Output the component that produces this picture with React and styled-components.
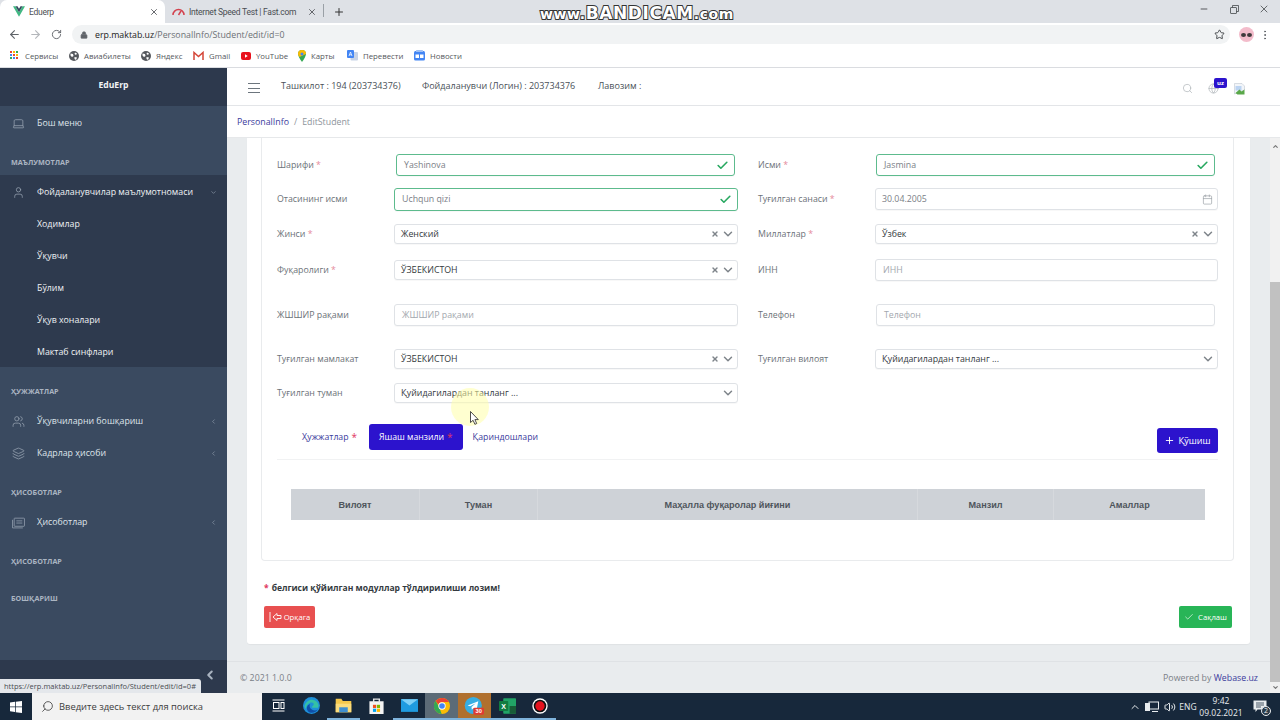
import React from "react";
import styled, { createGlobalStyle } from "styled-components";
import {
  ArrowLeft, ArrowRight, RotateCw, Lock, Star, MoreVertical, X, Plus, Minus, Check,
  ChevronDown, ChevronLeft, ChevronUp, Search, Globe, Laptop, User, Users, Layers,
  Calendar, Volume2,
} from "lucide-react";

const GlobalStyle = createGlobalStyle`
  html, body { margin: 0; padding: 0; height: 100%; overflow: hidden; }
  body { font-family: "Open Sans", "Noto Sans", sans-serif; color: #495057; }
  * { box-sizing: border-box; }
`;

const Page = styled.div`
  position: relative;
  width: 1280px;
  height: 720px;
  display: flex;
  flex-direction: column;
  overflow: hidden;
  background: #e9ecee;
`;

/* browser chrome */
const TabStrip = styled.div`
  height: 23px;
  background: #dee1e6;
  display: flex;
  align-items: stretch;
  font: 400 8.5px Roboto, sans-serif;
  letter-spacing: -0.25px;
  color: #4a4d52;
`;
const Tab = styled.div`
  width: ${(p) => p.$w}px;
  padding: 0 6px 0 ${(p) => p.$pad}px;
  display: flex;
  align-items: center;
  gap: ${(p) => p.$gap}px;
  background: ${(p) => (p.$active ? "#fff" : "transparent")};
  border-radius: 7px 7px 0 0;
  span { flex: 1; white-space: nowrap; }
`;
const TabDivider = styled.i`
  width: 1px;
  height: 13px;
  margin: 4px 0 0 0;
  background: #9aa0a6;
`;
const NewTab = styled.div`
  width: 30px;
  display: flex;
  align-items: center;
  justify-content: center;
`;
const WindowControls = styled.div`
  margin-left: auto;
  display: flex;
  align-items: center;
  padding: 0 1px 5px 0;
`;
const WindowButton = styled.div`
  width: 30px;
  display: flex;
  justify-content: center;
  color: #3c4043;
`;
const AddressBar = styled.div`
  height: 22px;
  background: #fff;
  display: flex;
  align-items: center;
  padding: 1px 5px 0 4px;
  color: #5f6368;
`;
const NavButton = styled.div`
  width: 21px;
  display: flex;
  justify-content: center;
  color: ${(p) => (p.$off ? "#b4b7bb" : "#5f6368")};
`;
const UrlPill = styled.div`
  flex: 1;
  height: 19px;
  margin-left: 5px;
  padding: 0 5px 0 8px;
  border-radius: 10px;
  background: #f1f3f4;
  display: flex;
  align-items: center;
  gap: 7px;
  font-size: 8.8px;
  color: #6c7075;
  b { font-weight: 400; color: #222; }
  svg:last-child { margin-left: auto; }
`;
const Avatar = styled.div`
  width: 15px;
  height: 15px;
  margin-left: 9px;
  border-radius: 50%;
  background: #f3bccb;
  display: flex;
  align-items: center;
  justify-content: center;
  gap: 1px;
  i { width: 5px; height: 4px; border-radius: 50%; background: #3f3a3c; }
`;
const BookmarksBar = styled.div`
  height: 23px;
  background: #fff;
  border-bottom: 1px solid #dadce0;
  display: flex;
  align-items: center;
  padding: 0 0 1px 10px;
  font-size: 7.8px;
  color: #55585d;
`;
const Bookmark = styled.div`
  width: ${(p) => p.$w}px;
  display: flex;
  align-items: center;
  gap: ${(p) => p.$gap || 5}px;
  white-space: nowrap;
`;
const AppsGrid = styled.div`
  width: 9px;
  height: 9px;
  display: grid;
  grid-template-columns: repeat(3, 2px);
  grid-auto-rows: 2px;
  gap: 1px;
  i { display: block; }
`;

/* app */
const Body = styled.div`
  flex: 1;
  min-height: 0;
  display: flex;
`;
const Sidebar = styled.aside`
  width: 227px;
  background: #3a4a60;
  display: flex;
  flex-direction: column;
  color: #dfe4ea;
  font-size: 8.8px;
`;
const Brand = styled.div`
  height: 38px;
  flex: none;
  background: #2d394d;
  color: #f1f3f5;
  font-weight: 700;
  font-size: 8.6px;
  display: flex;
  align-items: center;
  justify-content: center;
  padding-bottom: 4px;
`;
const MenuItem = styled.div`
  height: 32px;
  flex: none;
  display: flex;
  align-items: center;
  padding: 2px 10px 0 ${(p) => (p.$child ? 37 : 12)}px;
  font-weight: ${(p) => (p.$strong ? 500 : 400)};
  color: ${(p) => (p.$strong ? "#eef1f4" : "inherit")};
  svg.lead { width: 13px; height: 13px; margin-right: 12px; color: #98a4b3; flex: none; stroke-width: 1.4; }
  svg.tail { margin-left: auto; color: #98a4b3; }
`;
const OpenGroup = styled.div`
  background: #2e3a4e;
`;
const Section = styled.div`
  height: 37px;
  flex: none;
  padding: 18px 0 0 11px;
  font-size: 7.2px;
  font-weight: 700;
  line-height: 12px;
  color: #abb5c2;
`;
const SidebarFoot = styled.div`
  margin-top: auto;
  height: 33px;
  background: #2d394d;
  display: flex;
  justify-content: flex-end;
  padding: 8px 10px 0 0;
  color: #a9b3c0;
`;

const Main = styled.main`
  flex: 1;
  min-width: 0;
  display: flex;
  flex-direction: column;
`;
const TopBar = styled.header`
  height: 38px;
  flex: none;
  background: #fff;
  border-bottom: 1px solid #e3e5e8;
  display: flex;
  align-items: center;
  font-size: 9px;
  color: #495057;
  padding: 0 0 3px 21px;
`;
const Burger = styled.div`
  width: 12px;
  height: 10px;
  margin: 6px 21px 0 0;
  border-top: 1px solid #6c757d;
  border-bottom: 1px solid #6c757d;
  display: flex;
  align-items: center;
  &::before { content: ""; width: 100%; height: 1px; background: #6c757d; }
`;
const TopInfo = styled.span`
  width: ${(p) => p.$w}px;
  white-space: nowrap;
`;
const TopIcons = styled.div`
  margin-left: auto;
  margin-right: 35px;
  padding-top: 7px;
  display: flex;
  align-items: center;
  gap: 15px;
  color: #aeb3b8;
`;
const GlobeWrap = styled.div`
  position: relative;
  display: flex;
`;
const LangBadge = styled.span`
  position: absolute;
  left: 6px;
  top: -5px;
  width: 13px;
  height: 10px;
  border-radius: 2px;
  background: #2c13cd;
  color: #fff;
  font-size: 6px;
  font-weight: 700;
  line-height: 10px;
  text-align: center;
`;
const Breadcrumb = styled.nav`
  height: 32px;
  flex: none;
  background: #fff;
  border-bottom: 1px solid #e6e8ea;
  display: flex;
  align-items: center;
  gap: 5px;
  padding: 1px 0 0 10px;
  font-size: 8.8px;
  color: #8d949b;
  a { color: #3a3a9c; }
`;
const Scroller = styled.div`
  flex: 1;
  min-height: 0;
  display: flex;
`;
const Content = styled.div`
  flex: 1;
  min-width: 0;
  display: flex;
  flex-direction: column;
`;
const OuterCard = styled.section`
  height: 506px;
  flex: none;
  margin: 0 20px;
  padding: 0 16px 0 14px;
  background: #fff;
  border-radius: 0 0 3px 3px;
  box-shadow: 0 1px 1px rgba(0, 0, 0, 0.04);
`;
const InnerCard = styled.div`
  height: 423px;
  padding: 10px 15px 0 15px;
  border: 1px solid #e9ebed;
  border-top: 0;
  border-radius: 0 0 4px 4px;
`;
const FormRow = styled.div`
  height: ${(p) => p.$h}px;
  display: flex;
  gap: 20px;
  align-items: center;
`;
const Field = styled.div`
  width: ${(p) => p.$w}px;
  display: grid;
  grid-template-columns: 117px 1fr;
  align-items: center;
`;
const Label = styled.label`
  font-size: 8.8px;
  color: #6c7278;
  white-space: nowrap;
  em { font-style: normal; color: #e58a9b; }
`;
const Box = styled.div`
  height: ${(p) => p.$h || 22}px;
  margin: 0 ${(p) => (p.$inset ? 3 : 0)}px 0 ${(p) => p.$inset || 0}px;
  padding: 0 ${(p) => p.$right || 5}px 0 ${(p) => p.$pad || 8}px;
  display: flex;
  align-items: center;
  border: 1px solid ${(p) => (p.$valid ? "#5dbb8d" : "#dfe2e6")};
  border-radius: 3px;
  background: #fff;
  box-shadow: 0 1px 1px rgba(0, 0, 0, 0.03);
  font-size: 8.8px;
  color: #343a40;
  svg { flex: none; }
`;
const InputText = styled.span`
  flex: 1;
  color: ${(p) => (p.$muted ? "#a3a8ae" : p.$value ? "#7b8087" : "inherit")};
`;
const SelectIcons = styled.div`
  display: flex;
  align-items: center;
  gap: 2px;
  color: #7e848a;
`;

const TabsRow = styled.div`
  display: flex;
  align-items: flex-start;
  height: 36px;
  margin-top: 14px;
  border-bottom: 1px solid #f1f2f3;
  padding-left: 25px;
  font-size: 8.7px;
  color: #3a3a9c;
`;
const TabLink = styled.div`
  height: 26px;
  margin-right: ${(p) => p.$mr || 0}px;
  padding: ${(p) => (p.$active ? "0 10px" : "0")};
  display: flex;
  align-items: center;
  gap: 3px;
  white-space: nowrap;
  border-radius: 3px;
  background: ${(p) => (p.$active ? "#2c13cd" : "transparent")};
  color: ${(p) => (p.$active ? "#fff" : "inherit")};
  em { font-style: normal; color: #e0355f; font-size: 10px; }
`;
const AddButton = styled.button`
  margin: 4px 0 0 auto;
  width: 61px;
  height: 25px;
  border: 0;
  border-radius: 3px;
  background: #2c13cd;
  color: #fff;
  font: 500 9px "Open Sans", sans-serif;
  display: flex;
  align-items: center;
  justify-content: center;
  gap: 3px;
`;
const TableHead = styled.div`
  margin: 29px 13px 0 14px;
  height: 31px;
  display: grid;
  grid-template-columns: 128px 118px 380px 136px 152px;
  background: #ced2d7;
`;
const HeadCell = styled.div`
  display: flex;
  align-items: center;
  justify-content: center;
  font: 700 9.1px "Liberation Sans", Arial, sans-serif;
  color: #4f555c;
  & + & { border-left: 1px solid #d6d9dd; }
`;
const Note = styled.p`
  margin: 21px 0 0 3px;
  font-size: 8.5px;
  font-weight: 700;
  line-height: 12px;
  color: #343a40;
  em { font-style: normal; color: #e0355f; margin-right: 3px; }
`;
const Actions = styled.div`
  margin: 12px 2px 0 3px;
  display: flex;
  justify-content: space-between;
`;
const ActionButton = styled.button`
  width: ${(p) => p.$w}px;
  height: 22px;
  padding: 0;
  border: 0;
  border-radius: 2px;
  background: ${(p) => p.$bg};
  color: #fff;
  font: 400 7.7px "Open Sans", sans-serif;
  display: flex;
  align-items: center;
  justify-content: center;
  gap: 2px;
`;
const Footer = styled.footer`
  margin-top: 17px;
  height: 33px;
  border-top: 1px solid #dfe2e5;
  display: flex;
  align-items: center;
  justify-content: space-between;
  padding: 0 12px 0 13px;
  font-size: 8.8px;
  color: #7a8087;
  a { color: #3a3a9c; }
`;
const ScrollTrack = styled.div`
  width: 10px;
  flex: none;
  padding: 5px 0 2px;
  background: #f1f1f1;
  display: flex;
  flex-direction: column;
  align-items: center;
  color: #777;
`;
const ScrollThumb = styled.div`
  width: 100%;
  height: 400px;
  margin: 132px 0 auto;
  background: #c1c1c1;
`;

/* taskbar */
const Taskbar = styled.div`
  height: 27px;
  flex: none;
  background: #17283b;
  display: flex;
  align-items: stretch;
  color: #e8ecef;
`;
const StartButton = styled.div`
  width: 32px;
  display: flex;
  align-items: center;
  justify-content: center;
`;
const SearchBox = styled.div`
  width: 230px;
  background: #f2f2f2;
  display: flex;
  align-items: center;
  gap: 5px;
  padding-left: 9px;
  font-size: 9.4px;
  color: #3d3d3d;
`;
const TaskCell = styled.div`
  width: 32.7px;
  display: flex;
  align-items: center;
  justify-content: center;
  background: ${(p) => p.$bg || "transparent"};
  border-bottom: 2px solid ${(p) => (p.$open ? "#7fb4dc" : "transparent")};
`;
const Tray = styled.div`
  margin-left: auto;
  display: flex;
  align-items: center;
  font-size: 8.5px;
  padding-right: 5px;
`;
const TrayItem = styled.div`
  width: ${(p) => p.$w}px;
  display: flex;
  justify-content: center;
  text-align: center;
  line-height: 12px;
  position: relative;
`;
const NotifyBadge = styled.span`
  position: absolute;
  left: 16px;
  top: 6px;
  width: 10px;
  height: 10px;
  border-radius: 50%;
  background: #2b3a48;
  border: 1px solid #e8ecef;
  font-size: 7px;
  line-height: 8px;
`;

/* things lying over the page */
const StatusTip = styled.div`
  position: absolute;
  left: 0;
  bottom: 27px;
  width: 201px;
  height: 14px;
  padding-left: 4px;
  border-radius: 0 3px 0 0;
  background: #e4e7eb;
  font-size: 7.5px;
  line-height: 14px;
  color: #4a4d52;
  white-space: nowrap;
`;
const Watermark = styled.div`
  position: absolute;
  left: 540px;
  top: 3px;
  display: flex;
  align-items: baseline;
  font: 700 17px/20px "DejaVu Sans", sans-serif;
  letter-spacing: 0.6px;
  color: #fff;
  -webkit-text-stroke: 2px #333;
  paint-order: stroke fill;
  small { font-size: 14px; letter-spacing: 0.6px; }
`;
const CursorGlow = styled.div`
  position: absolute;
  left: 451px;
  top: 388px;
  width: 38px;
  height: 38px;
  border-radius: 50%;
  background: rgba(255, 255, 170, 0.55);
`;
const CursorArrow = styled.svg`
  position: absolute;
  left: 470px;
  top: 411px;
`;

const VueIcon = () => (
  <svg width="12" height="11" viewBox="0 0 24 21"><path fill="#41b883" d="M0 0h5l7 12 7-12h5L12 21z" /><path fill="#34495e" d="M5 0h4l3 5 3-5h4l-7 12z" /></svg>
);
const GaugeIcon = () => (
  <svg width="13" height="9" viewBox="0 0 26 16" fill="none" stroke="#d3434f" strokeWidth="3"><path d="M2 15a11 11 0 0 1 22 0" /><path d="M13 15l5-8" /></svg>
);
const GlobeDark = () => (
  <svg width="10" height="10" viewBox="0 0 20 20"><circle cx="10" cy="10" r="10" fill="#55585d" /><path d="M3 5l5 1 1 4-3 2-3-3zM12 3l4 2-2 3-3-2zM11 12l5 1-2 5-3-2z" fill="#fff" /></svg>
);
const GmailIcon = () => (
  <svg width="11" height="9" viewBox="0 0 22 18" fill="none" stroke="#d44638" strokeWidth="3"><path d="M2 18V3l9 8 9-8v15" /></svg>
);
const YoutubeIcon = () => (
  <svg width="10" height="8" viewBox="0 0 20 16"><rect width="20" height="16" rx="4" fill="#e8121d" /><path d="M8 4.500l5.500 3.500L8 11.500z" fill="#fff" /></svg>
);
const MapsIcon = () => (
  <svg width="8" height="12" viewBox="0 0 16 24"><path d="M8 0a8 8 0 0 1 8 8c0 5-8 16-8 16S0 13 0 8a8 8 0 0 1 8-8z" fill="#34a853" /><path d="M8 0a8 8 0 0 1 8 8L3 14C1 11 0 9.500 0 8a8 8 0 0 1 8-8z" fill="#fbbc04" /><circle cx="8" cy="8" r="3" fill="#4285f4" /></svg>
);
const TranslateIcon = () => (
  <svg width="11" height="11" viewBox="0 0 22 22"><rect x="7" y="4" width="15" height="17" rx="2" fill="#c8d3e6" /><rect width="14" height="16" rx="2" fill="#4285f4" /><path d="M4 12l3-8 3 8M5 9.500h4" stroke="#fff" strokeWidth="1.500" fill="none" /></svg>
);
const NewsIcon = () => (
  <svg width="11" height="11" viewBox="0 0 22 22"><rect y="2" width="22" height="19" rx="3" fill="#4285f4" /><rect x="4" y="0" width="14" height="4" rx="1" fill="#9fc0f5" /><rect x="3" y="9" width="7" height="7" fill="#fff" /><rect x="12" y="9" width="7" height="7" fill="#fff" /></svg>
);
const BrokenImage = () => (
  <svg width="11" height="12" viewBox="0 0 22 24"><path d="M1 1h15l5 5v8L1 22z" fill="#f2f5f9" stroke="#b6bec8" /><path d="M3 6h12v9H3z" fill="#bcd4f2" /><path d="M3 20l8-7 4 4 6-4v10H7z" fill="#5aa84a" /></svg>
);
const RestoreIcon = () => (
  <svg width="9" height="9" viewBox="0 0 18 18" fill="none" stroke="#3c4043" strokeWidth="1.500"><rect x="1" y="5" width="12" height="12" rx="1" /><path d="M5 5V1h12v12h-4" /></svg>
);
const ReportIcon = () => (
  <svg className="lead" viewBox="0 0 24 24" fill="none" stroke="currentColor"><rect x="4" y="4" width="19" height="15" rx="1" /><path d="M1 7v15h19M8 9h11M8 13h11" /></svg>
);
const BackIcon = () => (
  <svg width="13" height="12" viewBox="0 0 26 24" fill="none" stroke="#fff" strokeWidth="1.800"><path d="M2 2v20" /><path d="M16 5l-8 7 8 7v-4h8V9h-8z" /></svg>
);
const WindowsIcon = () => (
  <svg width="12" height="12" viewBox="0 0 24 24" fill="#fff"><path d="M0 3l10-1.500V11H0zM11.500 1.300L24 0v11H11.500zM0 12.500h10V22L0 20.700zM11.500 12.500H24V24l-12.500-1.500z" /></svg>
);
const TaskViewIcon = () => (
  <svg width="13" height="13" viewBox="0 0 26 26" fill="none" stroke="#fff" strokeWidth="2"><path d="M1 2h24M1 24h24" /><rect x="3" y="7" width="11" height="12" /><rect x="18" y="7" width="6" height="12" /></svg>
);
const EdgeIcon = () => (
  <svg width="17" height="17" viewBox="0 0 24 24"><circle cx="12" cy="12" r="12" fill="#1e90d8" /><path d="M2 14C3 6 11 2 17 5c5 3 6 8 4 10h-8c-1-3 3-3 2-6-3-3-10 0-11 8z" fill="#35c1a4" /><path d="M7 20c-3-4-1-9 3-10-2 4 1 9 7 9 2 0 3-1 4-2-2 5-10 7-14 3z" fill="#0f4fa8" /></svg>
);
const FolderIcon = () => (
  <svg width="17" height="15" viewBox="0 0 24 21"><path d="M1 1h8l2 3h12v16H1z" fill="#f5c84c" /><rect x="1" y="8" width="22" height="12" fill="#fbdc7c" /><rect x="6" y="13" width="12" height="7" fill="#3f8fd0" /></svg>
);
const StoreIcon = () => (
  <svg width="15" height="17" viewBox="0 0 20 24"><rect y="6" width="20" height="18" fill="#f4f4f4" /><path d="M6 8V3h8v5" fill="none" stroke="#e8e8e8" strokeWidth="2" /><rect x="5" y="11" width="4.500" height="4.500" fill="#f25022" /><rect x="10.500" y="11" width="4.500" height="4.500" fill="#7fba00" /><rect x="5" y="16.500" width="4.500" height="4.500" fill="#00a4ef" /><rect x="10.500" y="16.500" width="4.500" height="4.500" fill="#ffb900" /></svg>
);
const MailIcon = () => (
  <svg width="17" height="13" viewBox="0 0 24 18"><rect width="24" height="18" fill="#1f9be0" /><path d="M0 0l12 9 12-9z" fill="#7fd0f7" /></svg>
);
const ChromeIcon = () => (
  <svg width="16" height="16" viewBox="0 0 24 24"><circle cx="12" cy="12" r="12" fill="#fbbc04" /><path d="M12 0a12 12 0 0 1 10.400 6H12a6 6 0 0 0-5.600 3.800L2.500 4.500A12 12 0 0 1 12 0z" fill="#ea4335" /><path d="M2.500 4.500l5 8.500 4 11A12 12 0 0 1 2.500 4.500z" fill="#34a853" /><circle cx="12" cy="12" r="5.500" fill="#fff" /><circle cx="12" cy="12" r="4.200" fill="#4285f4" /></svg>
);
const TelegramIcon = () => (
  <svg width="20" height="19" viewBox="0 0 28 26"><circle cx="13" cy="13" r="12" fill="#37aee2" /><path d="M5 13l15-6-2.500 13-4.500-3-2 2-.5-4 6-5-8 4z" fill="#fff" /><rect x="13" y="16" width="15" height="10" rx="2" fill="#e03c31" /><text x="20.500" y="24" fontSize="8" fontWeight="700" fill="#fff" textAnchor="middle" fontFamily="Liberation Sans">30</text></svg>
);
const ExcelIcon = () => (
  <svg width="17" height="16" viewBox="0 0 24 22"><rect x="6" width="18" height="22" rx="1" fill="#21a366" /><rect x="15" y="11" width="9" height="11" fill="#185c37" /><rect y="4" width="13" height="14" rx="1" fill="#107c41" /><text x="6.500" y="15" fontSize="10" fontWeight="700" fill="#fff" textAnchor="middle" fontFamily="Liberation Sans">X</text></svg>
);
const RecordIcon = () => (
  <svg width="16" height="16" viewBox="0 0 24 24"><circle cx="12" cy="12" r="11.500" fill="#fff" /><circle cx="12" cy="12" r="9.500" fill="#111" /><circle cx="12" cy="12" r="7" fill="#e5121d" /></svg>
);
const NetworkIcon = () => (
  <svg width="14" height="12" viewBox="0 0 28 24" fill="none" stroke="#e8ecef" strokeWidth="2"><rect x="8" y="2" width="19" height="14" /><rect x="1" y="5" width="8" height="14" fill="#e8ecef" /><path d="M14 21h12" /></svg>
);
const NotifyIcon = () => (
  <svg width="14" height="13" viewBox="0 0 28 26" fill="#e8ecef"><path d="M1 1h26v18H9l-4 5v-5H1z" /><path d="M6 6h16M6 10h16M6 14h10" stroke="#17283b" strokeWidth="1.500" /></svg>
);

const Required = () => <em>*</em>;

const TextBox = ({ value, placeholder, valid, inset }) => (
  <Box $valid={valid} $inset={inset} $pad={7} $right={valid ? 5 : 5} $h={valid && !inset ? 23 : 22}>
    <InputText $value={!!value} $muted={!value}>{value || placeholder}</InputText>
    {valid && <Check size={13} color="#28a860" strokeWidth={3} />}
  </Box>
);

const SelectBox = ({ value, clearable = true }) => (
  <Box $pad={6} $right={2} $h={20}>
    <InputText>{value}</InputText>
    <SelectIcons>
      {clearable && <X size={8} strokeWidth={4} />}
      <ChevronDown size={14} strokeWidth={2.5} />
    </SelectIcons>
  </Box>
);

const appColors = ["#ea4335", "#fbbc04", "#34a853", "#4285f4", "#ea4335", "#fbbc04", "#34a853", "#4285f4", "#ea4335"];

const App = () => {
  return (
    <Page>
      <GlobalStyle />
      <TabStrip>
        <Tab $active $w={165} $pad={13} $gap={4}>
          <VueIcon />
          <span>Eduerp</span>
          <X size={10} />
        </Tab>
        <Tab $w={158} $pad={7} $gap={4}>
          <GaugeIcon />
          <span>Internet Speed Test | Fast.com</span>
          <X size={10} />
        </Tab>
        <TabDivider />
        <NewTab><Plus size={12} color="#333" /></NewTab>
        <WindowControls>
          <WindowButton><Minus size={10} /></WindowButton>
          <WindowButton><RestoreIcon /></WindowButton>
          <WindowButton><X size={12} strokeWidth={1.5} /></WindowButton>
        </WindowControls>
      </TabStrip>
      <AddressBar>
        <NavButton><ArrowLeft size={13} /></NavButton>
        <NavButton $off><ArrowRight size={13} /></NavButton>
        <NavButton><RotateCw size={11} /></NavButton>
        <UrlPill>
          <Lock size={8} fill="#5f6368" />
          <span><b>erp.maktab.uz</b>/PersonalInfo/Student/edit/id=0</span>
          <Star size={11} color="#3c4043" />
        </UrlPill>
        <Avatar><i /><i /></Avatar>
        <NavButton><MoreVertical size={12} /></NavButton>
      </AddressBar>
      <BookmarksBar>
        <Bookmark $w={59} $gap={6}>
          <AppsGrid>{appColors.map((c, i) => <i key={i} style={{ background: c }} />)}</AppsGrid>
          Сервисы
        </Bookmark>
        <Bookmark $w={72}><GlobeDark />Авиабилеты</Bookmark>
        <Bookmark $w={52}><GlobeDark />Яндекс</Bookmark>
        <Bookmark $w={48}><GmailIcon />Gmail</Bookmark>
        <Bookmark $w={57}><YoutubeIcon />YouTube</Bookmark>
        <Bookmark $w={49}><MapsIcon />Карты</Bookmark>
        <Bookmark $w={67}><TranslateIcon />Перевести</Bookmark>
        <Bookmark $w={60}><NewsIcon />Новости</Bookmark>
      </BookmarksBar>

      <Body>
        <Sidebar>
          <Brand>EduErp</Brand>
          <MenuItem><Laptop className="lead" />Бош меню</MenuItem>
          <Section>МАЪЛУМОТЛАР</Section>
          <OpenGroup>
            <MenuItem $strong>
              <User className="lead" />Фойдаланувчилар маълумотномаси
              <ChevronDown className="tail" size={7} />
            </MenuItem>
            <MenuItem $child $strong>Ходимлар</MenuItem>
            <MenuItem $child $strong>Ўқувчи</MenuItem>
            <MenuItem $child $strong>Бўлим</MenuItem>
            <MenuItem $child $strong>Ўқув хоналари</MenuItem>
            <MenuItem $child $strong>Мактаб синфлари</MenuItem>
          </OpenGroup>
          <Section>ҲУЖЖАТЛАР</Section>
          <MenuItem><Users className="lead" />Ўқувчиларни бошқариш<ChevronLeft className="tail" size={7} /></MenuItem>
          <MenuItem><Layers className="lead" />Кадрлар ҳисоби<ChevronLeft className="tail" size={7} /></MenuItem>
          <Section>ҲИСОБОТЛАР</Section>
          <MenuItem><ReportIcon />Ҳисоботлар<ChevronLeft className="tail" size={7} /></MenuItem>
          <Section>ҲИСОБОТЛАР</Section>
          <Section>БОШҚАРИШ</Section>
          <SidebarFoot><ChevronLeft size={14} strokeWidth={3.5} /></SidebarFoot>
        </Sidebar>

        <Main>
          <TopBar>
            <Burger />
            <TopInfo $w={141}>Ташкилот : 194 (203734376)</TopInfo>
            <TopInfo $w={176}>Фойдаланувчи (Логин) : 203734376</TopInfo>
            <TopInfo $w={60}>Лавозим :</TopInfo>
            <TopIcons>
              <Search size={11} strokeWidth={1.5} />
              <GlobeWrap>
                <Globe size={11} strokeWidth={1.5} />
                <LangBadge>uz</LangBadge>
              </GlobeWrap>
              <BrokenImage />
            </TopIcons>
          </TopBar>
          <Breadcrumb>
            <a>PersonalInfo</a><span>/</span><span>EditStudent</span>
          </Breadcrumb>
          <Scroller>
            <Content>
              <OuterCard>
                <InnerCard>
                  <FormRow $h={34}>
                    <Field $w={461}><Label>Шарифи <Required /></Label><TextBox value="Yashinova" valid inset={2} /></Field>
                    <Field $w={460}><Label>Исми <Required /></Label><TextBox value="Jasmina" valid inset={1} /></Field>
                  </FormRow>
                  <FormRow $h={34}>
                    <Field $w={461}><Label>Отасининг исми</Label><TextBox value="Uchqun qizi" valid /></Field>
                    <Field $w={460}>
                      <Label>Туғилган санаси <Required /></Label>
                      <Box $pad={6} $right={4} $h={22}>
                        <InputText $value>30.04.2005</InputText>
                        <Calendar size={11} color="#9aa0a6" strokeWidth={1.5} />
                      </Box>
                    </Field>
                  </FormRow>
                  <FormRow $h={36}>
                    <Field $w={461}><Label>Жинси <Required /></Label><SelectBox value="Женский" /></Field>
                    <Field $w={460}><Label>Миллатлар <Required /></Label><SelectBox value="Ўзбек" /></Field>
                  </FormRow>
                  <FormRow $h={36}>
                    <Field $w={461}><Label>Фуқаролиги <Required /></Label><SelectBox value="ЎЗБЕКИСТОН" /></Field>
                    <Field $w={460}><Label>ИНН</Label><TextBox placeholder="ИНН" /></Field>
                  </FormRow>
                  <FormRow $h={54}>
                    <Field $w={461}><Label>ЖШШИР рақами</Label><TextBox placeholder="ЖШШИР рақами" /></Field>
                    <Field $w={460}><Label>Телефон</Label><TextBox placeholder="Телефон" inset={1} /></Field>
                  </FormRow>
                  <FormRow $h={34}>
                    <Field $w={461}><Label>Туғилган мамлакат</Label><SelectBox value="ЎЗБЕКИСТОН" /></Field>
                    <Field $w={460}><Label>Туғилган вилоят</Label><SelectBox value="Қуйидагилардан танланг ..." clearable={false} /></Field>
                  </FormRow>
                  <FormRow $h={34}>
                    <Field $w={461}><Label>Туғилган туман</Label><SelectBox value="Қуйидагилардан танланг ..." clearable={false} /></Field>
                  </FormRow>
                  <TabsRow>
                    <TabLink $mr={12}>Ҳужжатлар <em>*</em></TabLink>
                    <TabLink $active $mr={10}>Яшаш манзили <em>*</em></TabLink>
                    <TabLink>Қариндошлари</TabLink>
                    <AddButton><Plus size={11} />Қўшиш</AddButton>
                  </TabsRow>
                  <TableHead>
                    <HeadCell>Вилоят</HeadCell>
                    <HeadCell>Туман</HeadCell>
                    <HeadCell>Маҳалла фуқаролар йиғини</HeadCell>
                    <HeadCell>Манзил</HeadCell>
                    <HeadCell>Амаллар</HeadCell>
                  </TableHead>
                </InnerCard>
                <Note><em>*</em>белгиси қўйилган модуллар тўлдирилиши лозим!</Note>
                <Actions>
                  <ActionButton $w={51} $bg="#e85050"><BackIcon />Орқага</ActionButton>
                  <ActionButton $w={53} $bg="#28b557"><Check size={10} strokeWidth={1.5} />&nbsp;Сақлаш</ActionButton>
                </Actions>
              </OuterCard>
              <Footer>
                <span>© 2021 1.0.0</span>
                <span>Powered by <a>Webase.uz</a></span>
              </Footer>
            </Content>
            <ScrollTrack>
              <ChevronUp size={7} strokeWidth={4} />
              <ScrollThumb />
              <ChevronDown size={7} strokeWidth={4} />
            </ScrollTrack>
          </Scroller>
        </Main>
      </Body>

      <Taskbar>
        <StartButton><WindowsIcon /></StartButton>
        <SearchBox><Search size={13} strokeWidth={1.5} style={{ transform: "scaleX(-1)" }} />Введите здесь текст для поиска</SearchBox>
        <TaskCell><TaskViewIcon /></TaskCell>
        <TaskCell><EdgeIcon /></TaskCell>
        <TaskCell $open><FolderIcon /></TaskCell>
        <TaskCell><StoreIcon /></TaskCell>
        <TaskCell $open><MailIcon /></TaskCell>
        <TaskCell $open $bg="#5c6b77"><ChromeIcon /></TaskCell>
        <TaskCell $open $bg="#b0702e"><TelegramIcon /></TaskCell>
        <TaskCell $open><ExcelIcon /></TaskCell>
        <TaskCell $open><RecordIcon /></TaskCell>
        <Tray>
          <TrayItem $w={16}><ChevronUp size={12} /></TrayItem>
          <TrayItem $w={18}><NetworkIcon /></TrayItem>
          <TrayItem $w={18}><Volume2 size={12} /></TrayItem>
          <TrayItem $w={18}>ENG</TrayItem>
          <TrayItem $w={48}>9:42<br />09.02.2021</TrayItem>
          <TrayItem $w={30}><NotifyIcon /><NotifyBadge>2</NotifyBadge></TrayItem>
        </Tray>
      </Taskbar>

      <StatusTip>https://erp.maktab.uz/PersonalInfo/Student/edit/id=0#</StatusTip>
      <Watermark><small>www.</small>BANDICAM<small>.com</small></Watermark>
      <CursorGlow />
      <CursorArrow width="9" height="14" viewBox="0 0 9 14">
        <path d="M.5.5v11l2.600-2.200 1.800 4 1.800-.8-1.800-3.900h3.400z" fill="#fff" stroke="#222" strokeWidth=".8" />
      </CursorArrow>
    </Page>
  );
};

export default App;
